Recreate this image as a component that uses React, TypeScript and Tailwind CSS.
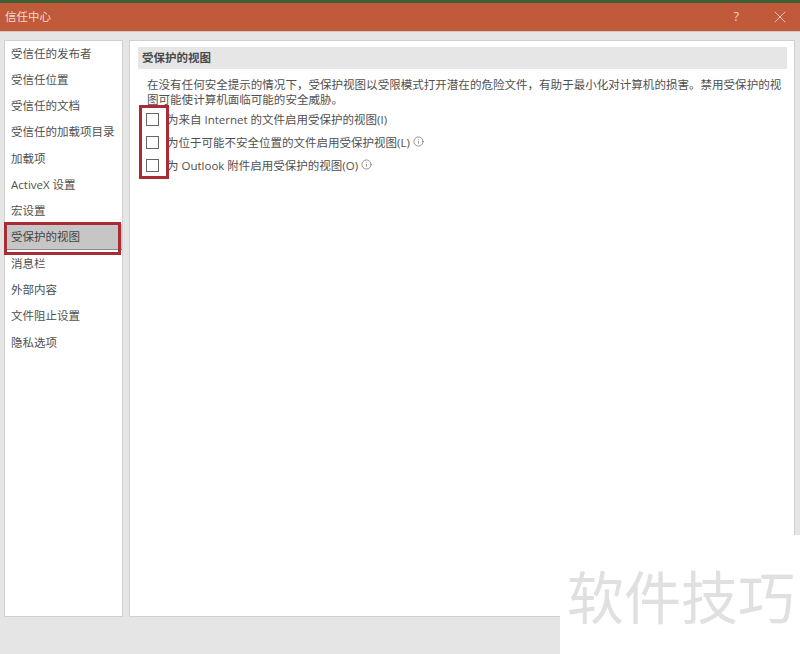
import React from "react";
import { X, Info } from "lucide-react";

const navItems = [
  "受信任的发布者",
  "受信任位置",
  "受信任的文档",
  "受信任的加载项目录",
  "加载项",
  "ActiveX 设置",
  "宏设置",
  "受保护的视图",
  "消息栏",
  "外部内容",
  "文件阻止设置",
  "隐私选项",
];

const options = [
  { label: "为来自 Internet 的文件启用受保护的视图(I)", key: "I", info: false },
  { label: "为位于可能不安全位置的文件启用受保护视图(L)", key: "L", info: true },
  { label: "为 Outlook 附件启用受保护的视图(O)", key: "O", info: true },
];

export default function App() {
  return (
    <div className="relative flex h-[654px] w-[800px] flex-col overflow-hidden bg-[#e5e5e5] font-['Open_Sans','Noto_Sans_CJK_SC',sans-serif] text-[11.5px] text-[#505050]">
      <div className="h-[3px] bg-[#3f5f35]" />

      {/* Title bar */}
      <div className="flex h-[28px] items-center justify-between bg-[#c1593b] pl-[5px] pr-[10px] text-[#f3dcd3]">
        <span className="text-[11.5px]">信任中心</span>
        <div className="flex items-center gap-[31px]">
          <span className="text-[12px]">?</span>
          <X className="h-[20px] w-[20px]" strokeWidth={1} />
        </div>
      </div>
      <div className="h-px bg-[#d8c9c4]" />

      {/* Body */}
      <div className="flex gap-[6px] pl-[4px] pt-[8px]">
        <div className="h-[577px] w-[119px] border border-[#d0d0d0] bg-white">
          <div className="-mt-px">
            {navItems.map((item) =>
              item === "受保护的视图" ? (
                <div
                  key={item}
                  className="flex h-[26.3px] items-center border-b border-[#8a8a8a] bg-[#c6c6c6] pl-[6px] text-[#444]"
                >
                  {item}
                </div>
              ) : (
                <div key={item} className="flex h-[26.3px] items-center pl-[6px]">
                  {item}
                </div>
              )
            )}
          </div>
        </div>

        <div className="h-[577px] w-[666px] border border-[#d0d0d0] bg-white px-[8px] pt-[6px]">
          <div className="flex h-[22px] w-[649px] items-center bg-[#e6e6e6] pl-[4px] font-bold text-[#4a4a4a]">
            受保护的视图
          </div>
          <p className="mt-[8px] w-[646px] pl-[9px] text-[11.54px] leading-[15px]">
            在没有任何安全提示的情况下，受保护视图以受限模式打开潜在的危险文件，有助于最小化对计算机的损害。禁用受保护的视图可能使计算机面临可能的安全威胁。
          </p>
          <div className="mt-[6px] flex flex-col gap-[10px] pl-[8px]">
            {options.map((option) => (
              <div key={option.key} className="flex h-[13px] items-center">
                <span className="h-[13px] w-[13px] shrink-0 border border-[#666] bg-white" />
                <span className="ml-[8px] whitespace-nowrap">{option.label}</span>
                {option.info && (
                  <Info className="mb-[3px] ml-[3px] h-[11px] w-[11px] text-[#666]" strokeWidth={1.5} />
                )}
              </div>
            ))}
          </div>
        </div>
      </div>

      {/* Red highlight annotations */}
      <div className="absolute left-[4px] top-[222px] h-[33px] w-[117px] border-[3px] border-[#a92c35]" />
      <div className="absolute left-[139px] top-[105px] h-[74px] w-[30px] border-[3px] border-[#a92c35]" />

      {/* Watermark */}
      <div className="absolute bottom-0 right-0 flex h-[119px] w-[240px] items-start bg-white pl-[7px] pt-[24px]">
        <span className="text-[57px] leading-[70px] text-[#e0e0e0] [font-family:'Noto_Sans_CJK_SC',sans-serif]">软件技巧</span>
      </div>
    </div>
  );
}
